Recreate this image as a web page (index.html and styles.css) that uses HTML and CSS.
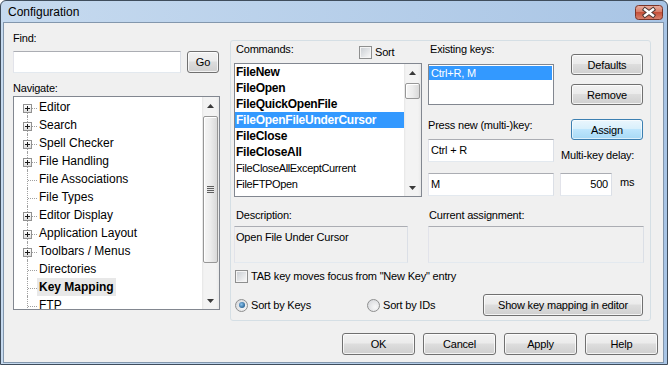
FILE: index.html
```html
<!DOCTYPE html>
<html>
<head>
<meta charset="utf-8">
<title>Configuration</title>
<link rel="stylesheet" href="styles.css">
</head>
<body>
<div class="window">
  <div class="titlebar">
    <span class="title">Configuration</span>
    <div class="close">
      <svg width="28" height="15" viewBox="0 0 28 15">
        <defs>
          <linearGradient id="cg" x1="0" y1="0" x2="0" y2="1">
            <stop offset="0" stop-color="#eab0a2"/>
            <stop offset="0.45" stop-color="#d77d68"/>
            <stop offset="0.5" stop-color="#c5513a"/>
            <stop offset="1" stop-color="#d98470"/>
          </linearGradient>
        </defs>
        <rect x="0.5" y="0.5" width="27" height="14" rx="3" fill="url(#cg)" stroke="#7a3428"/>
        <path d="M10 4.5 L18 10.5 M18 4.5 L10 10.5" stroke="#4d3833" stroke-width="4.4" stroke-linecap="square"/>
        <path d="M10 4.5 L18 10.5 M18 4.5 L10 10.5" stroke="#ffffff" stroke-width="2.4" stroke-linecap="square"/>
      </svg>
    </div>
  </div>
  <div class="client">
    <div class="top">
      <div class="leftcol">
        <div class="lbl">Find:</div>
        <div class="findrow">
          <div class="input find"></div>
          <div class="btn go">Go</div>
        </div>
        <div class="lbl nav">Navigate:</div>
        <div class="tree">
          <div class="tree-items">
            <div class="trow first"><span class="conn"><i class="v"></i><i class="h"></i><i class="plus"></i></span><span class="tlabel">Editor</span></div>
            <div class="trow"><span class="conn"><i class="v"></i><i class="h"></i><i class="plus"></i></span><span class="tlabel">Search</span></div>
            <div class="trow"><span class="conn"><i class="v"></i><i class="h"></i><i class="plus"></i></span><span class="tlabel">Spell Checker</span></div>
            <div class="trow"><span class="conn"><i class="v"></i><i class="h"></i><i class="plus"></i></span><span class="tlabel">File Handling</span></div>
            <div class="trow"><span class="conn"><i class="v"></i><i class="h"></i></span><span class="tlabel">File Associations</span></div>
            <div class="trow"><span class="conn"><i class="v"></i><i class="h"></i></span><span class="tlabel">File Types</span></div>
            <div class="trow"><span class="conn"><i class="v"></i><i class="h"></i><i class="plus"></i></span><span class="tlabel">Editor Display</span></div>
            <div class="trow"><span class="conn"><i class="v"></i><i class="h"></i><i class="plus"></i></span><span class="tlabel">Application Layout</span></div>
            <div class="trow"><span class="conn"><i class="v"></i><i class="h"></i><i class="plus"></i></span><span class="tlabel">Toolbars / Menus</span></div>
            <div class="trow"><span class="conn"><i class="v"></i><i class="h"></i></span><span class="tlabel">Directories</span></div>
            <div class="trow"><span class="conn"><i class="v"></i><i class="h"></i></span><span class="tlabel sel">Key Mapping</span></div>
            <div class="trow"><span class="conn"><i class="v"></i><i class="h"></i></span><span class="tlabel">FTP</span></div>
          </div>
          <div class="vscroll">
            <div class="sb-btn"><svg width="7" height="4" viewBox="0 0 7 4"><path d="M3.5 0 L7 4 L0 4 Z" fill="#3a3a3a"/></svg></div>
            <div class="thumb tree-thumb"><span class="grip"></span></div>
            <div class="sb-space"></div>
            <div class="sb-btn"><svg width="7" height="4" viewBox="0 0 7 4"><path d="M0 0 L7 0 L3.5 4 Z" fill="#3a3a3a"/></svg></div>
          </div>
        </div>
      </div>

      <div class="group">
        <div class="gtop">
          <div class="cmdcol">
            <div class="cmdhead">
              <span class="cmdlbl">Commands:</span>
              <span class="chkrow"><span class="chk"></span><span class="chktext">Sort</span></span>
            </div>
            <div class="cmdlist">
              <div class="cmditems">
                <div class="ci b">FileNew</div>
                <div class="ci b">FileOpen</div>
                <div class="ci b">FileQuickOpenFile</div>
                <div class="ci b sel">FileOpenFileUnderCursor</div>
                <div class="ci b">FileClose</div>
                <div class="ci b">FileCloseAll</div>
                <div class="ci">FileCloseAllExceptCurrent</div>
                <div class="ci">FileFTPOpen</div>
                <div class="ci">FileFTPSaveAs</div>
              </div>
              <div class="vscroll">
                <div class="sb-btn"><svg width="7" height="4" viewBox="0 0 7 4"><path d="M3.5 0 L7 4 L0 4 Z" fill="#3a3a3a"/></svg></div>
                <div class="thumb cmd-thumb"></div>
                <div class="sb-space"></div>
                <div class="sb-btn"><svg width="7" height="4" viewBox="0 0 7 4"><path d="M0 0 L7 0 L3.5 4 Z" fill="#3a3a3a"/></svg></div>
              </div>
            </div>
          </div>

          <div class="rarea">
            <div class="r1">
              <div class="colA">
                <div class="lbl r1lbl">Existing keys:</div>
                <div class="keylist"><div class="krow">Ctrl+R, M</div></div>
              </div>
              <div class="colB1">
                <div class="btn defaults">Defaults</div>
                <div class="btn remove">Remove</div>
              </div>
            </div>
            <div class="r2">
              <div class="colA">
                <div class="lbl r2lbl">Press new (multi-)key:</div>
                <div class="input keyin">Ctrl + R</div>
              </div>
              <div class="colB2">
                <div class="btn def assign">Assign</div>
                <div class="lbl delaylbl">Multi-key delay:</div>
              </div>
            </div>
            <div class="r3">
              <div class="input keyin2">M</div>
              <div class="input delay">500</div>
              <span class="ms">ms</span>
            </div>
          </div>
        </div>

        <div class="descrow">
          <div class="desccol">
            <div class="lbl dlbl">Description:</div>
            <div class="rbox">Open File Under Cursor</div>
          </div>
          <div class="curcol">
            <div class="lbl clbl">Current assignment:</div>
            <div class="rbox"></div>
          </div>
        </div>

        <div class="tabrow">
          <span class="chk"></span><span class="chktext">TAB key moves focus from &quot;New Key&quot; entry</span>
        </div>

        <div class="radrow">
          <span class="ropt first"><span class="radio on"></span><span class="chktext">Sort by Keys</span></span>
          <span class="ropt"><span class="radio"></span><span class="chktext">Sort by IDs</span></span>
          <div class="btn showbtn">Show key mapping in editor</div>
        </div>
      </div>
    </div>

    <div class="bottom">
      <div class="btn">OK</div>
      <div class="btn">Cancel</div>
      <div class="btn">Apply</div>
      <div class="btn">Help</div>
    </div>
  </div>
</div>
</body>
</html>
```

FILE: styles.css
```css
* { box-sizing: border-box; }
html, body { margin: 0; padding: 0; }
body {
  width: 668px;
  height: 365px;
  overflow: hidden;
  background: #ffffff;
  font-family: "Liberation Sans", Arial, sans-serif;
  font-size: 11px;
  letter-spacing: -0.2px;
  color: #000;
}

.window {
  width: 668px;
  height: 365px;
  border: 1px solid #3f4d5c;
  border-radius: 6px 6px 0 0;
  background: linear-gradient(to right, #c6daef, #a9c5e5);
  display: flex;
  flex-direction: column;
  overflow: hidden;
}

.titlebar {
  flex: 0 0 21px;
  height: 21px;
  display: flex;
  align-items: flex-start;
  padding-left: 7px;
}
.title {
  font-size: 12px;
  letter-spacing: 0;
  line-height: 16px;
  margin-top: 3px;
}
.close {
  margin-left: auto;
  margin-right: 4px;
  margin-top: 4px;
  width: 28px;
  height: 15px;
}
.close svg { display: block; }

.client {
  flex: 1;
  margin: 0 3px 1px 2px;
  border: 1px solid #8397ad;
  background: #f0f0f0;
  display: flex;
  flex-direction: column;
}

.top {
  display: flex;
  align-items: flex-start;
  padding-left: 9px;
}

.lbl {
  height: 14px;
  line-height: 14px;
  white-space: nowrap;
}

.leftcol {
  width: 207px;
  margin-top: 8px;
  display: flex;
  flex-direction: column;
}
.findrow { display: flex; margin-top: 6px; }
.input {
  background: #fff;
  border: 1px solid;
  border-color: #abadb3 #dbdfe6 #e3e9ef #e2e3ea;
  white-space: nowrap;
}
.find { width: 168px; height: 22px; }
.go { width: 32px; height: 22px; margin-left: 6px; }
.nav { margin-top: 8px; }

.tree {
  margin-top: 1px;
  height: 214px;
  border: 1px solid #828790;
  background: #fff;
  display: flex;
  overflow: hidden;
}
.tree-items {
  flex: 1;
  padding-top: 1px;
  overflow: hidden;
}
.trow {
  height: 18px;
  display: flex;
}
.conn {
  position: relative;
  flex: 0 0 23px;
  width: 23px;
}
.conn i { position: absolute; display: block; }
.conn .v {
  left: 13px;
  top: 0;
  bottom: 0;
  border-left: 1px dotted #a0a0a0;
}
.trow.first .conn .v { top: 10px; }
.conn .h {
  left: 14px;
  top: 10px;
  width: 9px;
  border-top: 1px dotted #a0a0a0;
}
.conn .plus {
  left: 9px;
  top: 6px;
  width: 9px;
  height: 9px;
  border: 1px solid #919191;
  background: linear-gradient(#ffffff, #dedede);
}
.conn .plus::before {
  content: "";
  position: absolute;
  left: 1px;
  top: 3px;
  width: 5px;
  height: 1px;
  background: #1a1a1a;
}
.conn .plus::after {
  content: "";
  position: absolute;
  left: 3px;
  top: 1px;
  width: 1px;
  height: 5px;
  background: #1a1a1a;
}
.tlabel {
  font-size: 12px;
  letter-spacing: 0;
  line-height: 18px;
  padding: 0 2px;
  white-space: nowrap;
}
.tlabel.sel {
  font-weight: bold;
  background: #e8e8e8;
}

/* scrollbars */
.vscroll {
  flex: 0 0 17px;
  width: 17px;
  display: flex;
  flex-direction: column;
  background: linear-gradient(to right, #e6e6e6 0, #f3f3f3 2px, #f3f3f3 14px, #e9e9e9 17px);
}
.sb-btn {
  height: 17px;
  flex: 0 0 17px;
  display: flex;
  align-items: center;
  justify-content: center;
}
.sb-btn svg { display: block; }
.thumb {
  margin: 2px 1px 0 1px;
  border: 1px solid #979797;
  border-radius: 2px;
  background: linear-gradient(to right, #f6f6f6, #ececec 50%, #d9d9d9);
  box-shadow: inset 1px 1px 0 #ffffff;
  display: flex;
  align-items: center;
  justify-content: center;
}
.tree-thumb { height: 147px; }
.cmd-thumb { height: 16px; }
.grip {
  width: 7px;
  height: 7px;
  background: repeating-linear-gradient(to bottom, #5f5f5f 0, #5f5f5f 1px, #e8e8e8 1px, #e8e8e8 2px);
}
.sb-space { flex: 1; }

/* group */
.group {
  margin-left: 10px;
  margin-top: 17px;
  width: 421px;
  height: 281px;
  border: 1px solid #d5dfe5;
  border-radius: 3px;
  padding: 0 6px 0 3px;
  display: flex;
  flex-direction: column;
}
.gtop {
  display: flex;
  height: 156px;
}
.cmdcol {
  width: 188px;
  display: flex;
  flex-direction: column;
}
.cmdhead {
  display: flex;
  align-items: flex-start;
  margin-top: 1px;
  height: 17px;
}
.cmdlbl {
  flex: 0 0 125px;
  padding-left: 2px;
  line-height: 14px;
}
.chkrow {
  display: flex;
  align-items: center;
  margin-top: 4px;
  height: 13px;
}
.chk {
  flex: 0 0 13px;
  width: 13px;
  height: 13px;
  border: 1px solid #8e8f8f;
  background: #f4f4f4;
  padding: 1px;
}
.chk::before {
  content: "";
  display: block;
  width: 9px;
  height: 9px;
  background: linear-gradient(135deg, #cbcfd4, #f7f7f7);
}
.chktext {
  margin-left: 3px;
  line-height: 13px;
  white-space: nowrap;
}

.cmdlist {
  margin-top: 4px;
  height: 134px;
  border: 1px solid #828790;
  background: #fff;
  display: flex;
  overflow: hidden;
}
.cmditems {
  flex: 1;
  overflow: hidden;
}
.ci {
  height: 16px;
  line-height: 16px;
  padding-left: 1px;
  white-space: nowrap;
  font-size: 11px;
  letter-spacing: -0.35px;
}
.ci.b {
  font-weight: bold;
  font-size: 12px;
  letter-spacing: -0.25px;
}
.ci.sel {
  background: #3399ff;
  color: #fff;
}

.rarea {
  margin-left: 6px;
  width: 215px;
  display: flex;
  flex-direction: column;
}
.r1, .r2, .r3 { display: flex; }
.colA {
  width: 126px;
  flex: 0 0 126px;
  display: flex;
  flex-direction: column;
}
.r1lbl { margin-top: 1px; padding-left: 2px; }
.keylist {
  margin-top: 8px;
  height: 41px;
  border: 1px solid #828790;
  background: #fff;
  padding: 1px 1px 0 0;
}
.krow {
  height: 14px;
  line-height: 14px;
  padding-left: 2px;
  background: #3399ff;
  color: #fff;
}
.colB1 {
  margin-left: 17px;
  width: 72px;
  display: flex;
  flex-direction: column;
}
.defaults { height: 21px; margin-top: 13px; }
.remove { height: 21px; margin-top: 9px; }

.r2lbl { margin-top: 13px; }
.keyin {
  margin-top: 7px;
  height: 23px;
  line-height: 20px;
  padding-left: 2px;
}
.colB2 {
  margin-left: 6px;
  width: 83px;
  display: flex;
  flex-direction: column;
}
.assign {
  margin-top: 14px;
  margin-left: 11px;
  width: 72px;
  height: 21px;
}
.delaylbl { margin-top: 8px; padding-left: 1px; }

.r3 { margin-top: 11px; align-items: flex-start; }
.keyin2 {
  width: 126px;
  height: 23px;
  line-height: 20px;
  padding-left: 2px;
}
.delay {
  margin-left: 6px;
  width: 52px;
  height: 23px;
  line-height: 20px;
  text-align: right;
  padding-right: 3px;
}
.ms {
  margin-left: 8px;
  margin-top: 2px;
  line-height: 14px;
}

.descrow {
  display: flex;
  margin-top: 11px;
}
.desccol {
  width: 174px;
  display: flex;
  flex-direction: column;
}
.curcol {
  margin-left: 20px;
  width: 216px;
  display: flex;
  flex-direction: column;
}
.dlbl { padding-left: 2px; }
.clbl { padding-left: 1px; }
.rbox {
  margin-top: 4px;
  height: 37px;
  border: 1px solid;
  border-color: #abadb3 #dbdfe6 #e3e9ef #e2e3ea;
  background: #f0f0f0;
  padding: 3px 0 0 1px;
  line-height: 14px;
  white-space: nowrap;
}

.tabrow {
  display: flex;
  align-items: center;
  margin-top: 7px;
  height: 13px;
  padding-left: 1px;
}

.radrow {
  display: flex;
  align-items: center;
  margin-top: 11px;
  height: 22px;
}
.ropt {
  display: flex;
  align-items: center;
}
.ropt.first {
  width: 132px;
  margin-left: 1px;
}
.radio {
  flex: 0 0 13px;
  width: 13px;
  height: 13px;
  border-radius: 50%;
  border: 1px solid #8e8f8f;
  background: radial-gradient(circle at 65% 65%, #f8f8f8, #d2d4d8);
  display: flex;
  align-items: center;
  justify-content: center;
}
.radio.on::before {
  content: "";
  width: 6px;
  height: 6px;
  border-radius: 50%;
  background: radial-gradient(circle at 40% 40%, #8cc4ee, #1f5a8c 80%);
}
.showbtn {
  margin-left: auto;
  margin-right: 1px;
  width: 160px;
  height: 22px;
}

/* buttons */
.btn {
  display: flex;
  align-items: center;
  justify-content: center;
  border: 1px solid #707070;
  border-radius: 3px;
  background: linear-gradient(#f2f2f2 0%, #ebebeb 45%, #dddddd 50%, #cfcfcf 100%);
  box-shadow: inset 0 0 0 1px rgba(255, 255, 255, 0.75);
  line-height: 14px;
  white-space: nowrap;
}
.btn.def {
  border-color: #3c7fb1;
  background: linear-gradient(#eaf6fd 0%, #d9f0fc 45%, #bee6fd 50%, #a7d9f5 100%);
  box-shadow: inset 0 0 0 1px rgba(255, 255, 255, 0.6);
}

.bottom {
  display: flex;
  justify-content: flex-end;
  gap: 8px;
  padding-right: 5px;
  margin-top: 12px;
}
.bottom .btn {
  width: 73px;
  height: 22px;
}
```
